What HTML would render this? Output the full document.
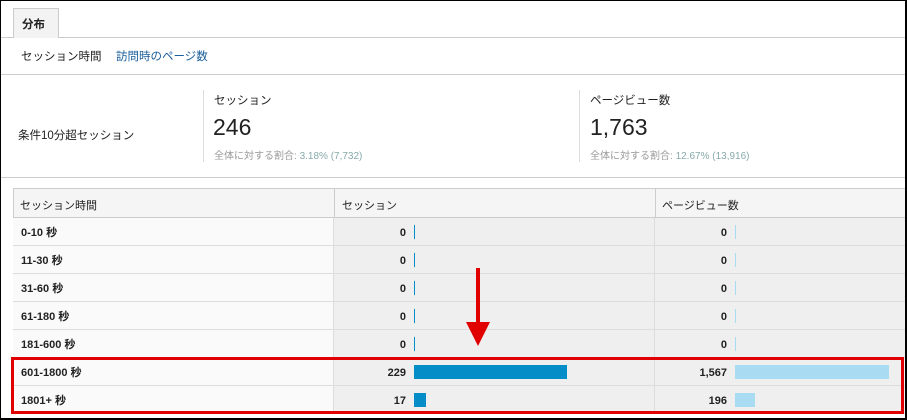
<!DOCTYPE html>
<html><head><meta charset="utf-8"><style>
*{margin:0;padding:0;box-sizing:border-box}
body{width:907px;height:420px;position:relative;background:#fff;font-family:"Liberation Sans","Noto Sans CJK JP",sans-serif;color:#222;overflow:hidden}
.a{position:absolute}
.frame{left:0;top:0;width:907px;height:420px;border:1px solid #000;border-right-width:2px;border-bottom-width:2px;z-index:10}
.t{font-size:11.5px;white-space:nowrap}
.hl{height:1px;background:#ccc}
.row{left:13px;width:892px;height:28px;border-bottom:1px solid #ddd}
.c1{left:0;width:321px;height:27px;background:#fafafa;border-right:1px solid #ddd}
.c2{left:321px;width:321px;height:27px;background:#efefef;border-right:1px solid #ddd}
.c3{left:642px;width:250px;height:27px;background:#efefef}
.lab{left:8px;top:8px;font-size:11px;line-height:14px;font-weight:bold}
.num{font-size:11px;line-height:14px;font-weight:bold;top:8px;text-align:right;width:60px}
.b1{background:#058dc7;top:7px;height:14px}
.b2{background:#a9dcf2;top:7px;height:14px}
</style></head><body>
<div class="a frame"></div>
<div class="a" style="left:13px;top:8px;width:46px;height:30px;border:1px solid #ccc;border-bottom:none;background:#f3f3f3"></div>
<div class="a t" style="left:22px;top:16px;font-weight:bold">分布</div>
<div class="a hl" style="left:1px;top:37px;width:905px"></div>
<div class="a hl" style="left:14px;top:37px;width:44px;background:#f3f3f3"></div>
<div class="a t" style="left:21px;top:48px;font-size:11.5px">セッション時間</div>
<div class="a t" style="left:116px;top:48px;font-size:11.5px;color:#1a5e9a">訪問時のページ数</div>
<div class="a hl" style="left:1px;top:74px;width:905px"></div>
<div class="a t" style="left:18px;top:127px">条件10分超セッション</div>
<div class="a" style="left:203px;top:90px;width:1px;height:72px;background:#ddd"></div>
<div class="a t" style="left:214px;top:92px">セッション</div>
<div class="a" style="left:213px;top:114px;font-size:23px">246</div>
<div class="a" style="left:214px;top:147px;font-size:10px;color:#999">全体に対する割合: <span style="color:#8aa">3.18% (7,732)</span></div>
<div class="a" style="left:579px;top:90px;width:1px;height:72px;background:#ddd"></div>
<div class="a t" style="left:590px;top:92px">ページビュー数</div>
<div class="a" style="left:590px;top:114px;font-size:23px">1,763</div>
<div class="a" style="left:590px;top:147px;font-size:10px;color:#999">全体に対する割合: <span style="color:#8aa">12.67% (13,916)</span></div>
<div class="a hl" style="left:1px;top:177px;width:905px"></div>
<div class="a" style="left:13px;top:188px;width:892px;height:30px;background:#f5f5f5;border-top:1px solid #ccc;border-left:1px solid #ccc;border-bottom:1px solid #ccc"></div>
<div class="a" style="left:334px;top:189px;width:1px;height:29px;background:#ccc"></div>
<div class="a" style="left:655px;top:189px;width:1px;height:29px;background:#ccc"></div>
<div class="a" style="left:20px;top:197px;font-size:11px">セッション時間</div>
<div class="a" style="left:342px;top:197px;font-size:11px">セッション</div>
<div class="a" style="left:662px;top:197px;font-size:11px">ページビュー数</div>

<div class="a row" style="top:218px"><div class="a c1"></div><div class="a c2"></div><div class="a c3"></div><div class="a lab">0-10 秒</div><div class="a num" style="left:333px">0</div><div class="a b1" style="left:401px;width:1px"></div><div class="a num" style="left:654px">0</div><div class="a b2" style="left:722px;width:1px"></div></div>
<div class="a row" style="top:246px"><div class="a c1"></div><div class="a c2"></div><div class="a c3"></div><div class="a lab">11-30 秒</div><div class="a num" style="left:333px">0</div><div class="a b1" style="left:401px;width:1px"></div><div class="a num" style="left:654px">0</div><div class="a b2" style="left:722px;width:1px"></div></div>
<div class="a row" style="top:274px"><div class="a c1"></div><div class="a c2"></div><div class="a c3"></div><div class="a lab">31-60 秒</div><div class="a num" style="left:333px">0</div><div class="a b1" style="left:401px;width:1px"></div><div class="a num" style="left:654px">0</div><div class="a b2" style="left:722px;width:1px"></div></div>
<div class="a row" style="top:302px"><div class="a c1"></div><div class="a c2"></div><div class="a c3"></div><div class="a lab">61-180 秒</div><div class="a num" style="left:333px">0</div><div class="a b1" style="left:401px;width:1px"></div><div class="a num" style="left:654px">0</div><div class="a b2" style="left:722px;width:1px"></div></div>
<div class="a row" style="top:330px"><div class="a c1"></div><div class="a c2"></div><div class="a c3"></div><div class="a lab">181-600 秒</div><div class="a num" style="left:333px">0</div><div class="a b1" style="left:401px;width:1px"></div><div class="a num" style="left:654px">0</div><div class="a b2" style="left:722px;width:1px"></div></div>
<div class="a row" style="top:358px"><div class="a c1"></div><div class="a c2"></div><div class="a c3"></div><div class="a lab">601-1800 秒</div><div class="a num" style="left:333px">229</div><div class="a b1" style="left:401px;width:153px"></div><div class="a num" style="left:654px">1,567</div><div class="a b2" style="left:722px;width:154px"></div></div>
<div class="a row" style="top:386px"><div class="a c1"></div><div class="a c2"></div><div class="a c3"></div><div class="a lab">1801+ 秒</div><div class="a num" style="left:333px">17</div><div class="a b1" style="left:401px;width:12px"></div><div class="a num" style="left:654px">196</div><div class="a b2" style="left:722px;width:20px"></div></div>

<div class="a" style="left:11px;top:357px;width:893px;height:57px;border:3px solid #e00000"></div>
<div class="a" style="left:476px;top:268px;width:4px;height:56px;background:#e00000"></div>
<div class="a" style="left:466px;top:322px;width:0;height:0;border-left:12px solid transparent;border-right:12px solid transparent;border-top:24px solid #e00000"></div>
</body></html>
